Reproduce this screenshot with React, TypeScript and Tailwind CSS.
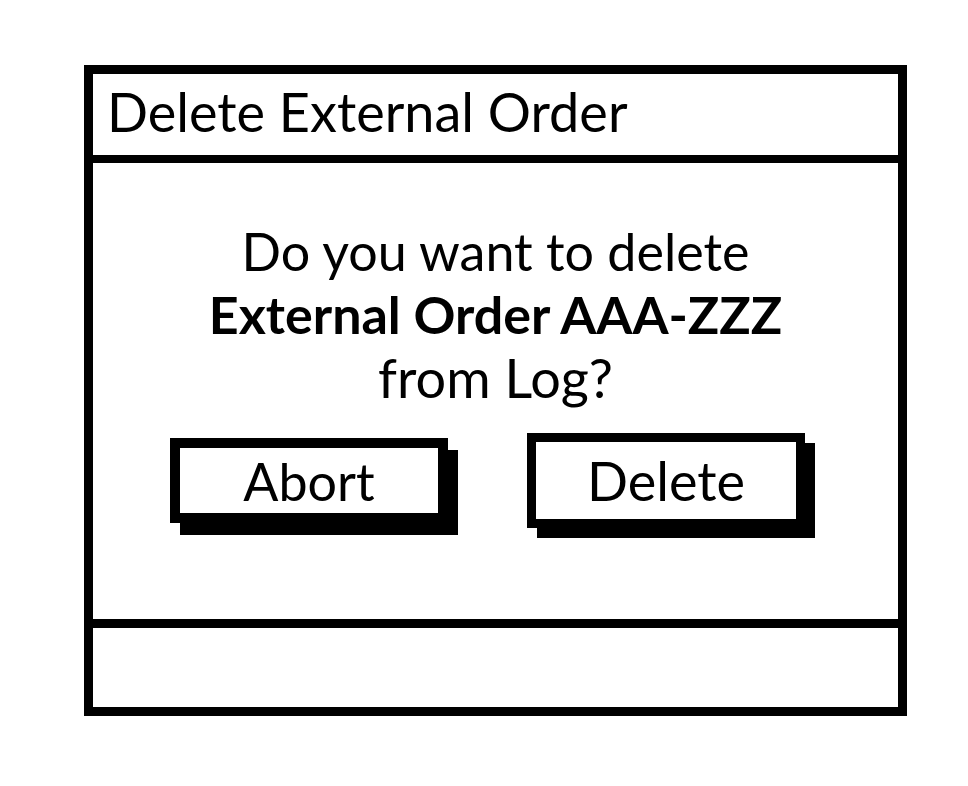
export default function App() {
  return (
    <div className="h-[786px] w-[968px] bg-white pl-[84px] pt-[65px] text-black [font-family:Lato,'Open_Sans',sans-serif]">
      <div className="flex h-[651px] w-[823px] flex-col border-[9px] border-black">
        {/* title bar */}
        <div className="flex h-[89px] items-center border-b-[8px] border-black pb-[6px] pl-[14px] text-[54px] leading-none">
          Delete External Order
        </div>

        {/* message + actions */}
        <div className="flex flex-1 flex-col">
          <div className="pt-[57px] text-center text-[52px] leading-[63px]">
            <p>Do you want to delete</p>
            <p className="font-bold">External Order AAA-ZZZ</p>
            <p className="text-[54px]">from Log?</p>
          </div>
          <div className="mt-[24px] flex items-start pl-[77px]">
            <button className="mt-[5px] flex h-[85px] w-[278px] items-center justify-center border-[10px] border-black bg-white text-[52px] leading-none shadow-[10px_12px_0_0_#000]">
              Abort
            </button>
            <button className="ml-[79px] flex h-[95px] w-[278px] items-center justify-center border-[9px] border-black bg-white text-[54px] leading-none shadow-[10px_10px_0_0_#000]">
              Delete
            </button>
          </div>
        </div>

        {/* empty footer */}
        <div className="h-[88px] border-t-[9px] border-black" />
      </div>
    </div>
  )
}
